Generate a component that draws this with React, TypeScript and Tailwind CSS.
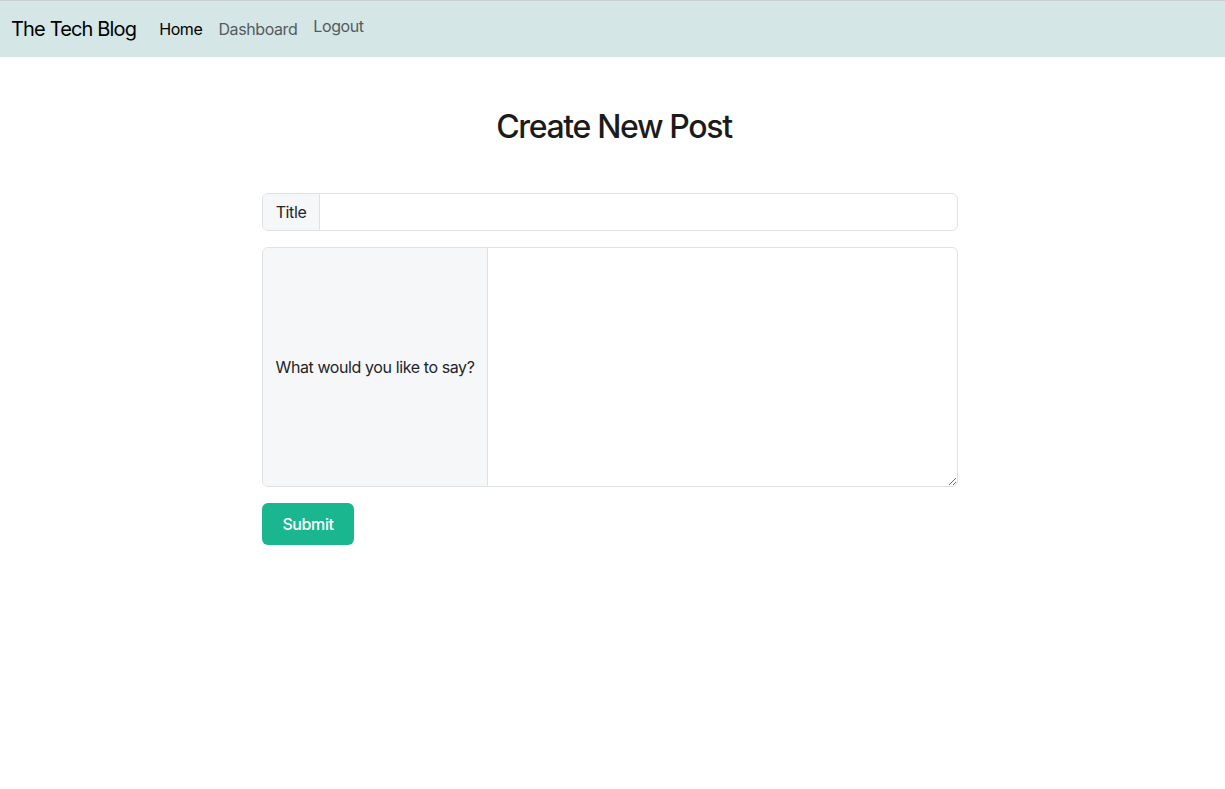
import React from "react";

export default function App() {
  const font = { fontFamily: "Inter, 'Noto Sans', 'Liberation Sans', sans-serif" };
  return (
    <div className="min-h-screen bg-white text-[#212529] tracking-[-0.025em]" style={font}>
      <nav className="h-[57px] bg-[#d4e6e5] border-t border-[#c9cfcf] flex items-center px-[11px]">
        <span className="text-[20px] text-black mr-[23px] tracking-[-0.042em]">The Tech Blog</span>
        <div className="flex items-center gap-[16px] text-[16px]">
          <a className="text-black">Home</a>
          <a className="text-[#555b5e]">Dashboard</a>
          <a className="text-[#555b5e] -mt-[6px]">Logout</a>
        </div>
      </nav>
      <h2 className="text-[32px] font-medium text-center text-[#1b1b1b] mt-[51px] mb-[47px] leading-[38px] tracking-[-0.042em] pl-[3px]">
        Create New Post
      </h2>
      <main className="w-[696px] ml-[262px]">
        <div className="flex h-[38px] border border-[#dee2e6] rounded-[6px] overflow-hidden">
          <span className="bg-[#f6f7f9] border-r border-[#dee2e6] w-[57px] shrink-0 flex items-center justify-center text-[16px]">Title</span>
          <input className="flex-1 outline-none px-3" />
        </div>
        <div className="flex h-[240px] mt-[16px] border border-[#dee2e6] rounded-[6px] overflow-hidden">
          <span className="bg-[#f6f7f9] border-r border-[#dee2e6] w-[225px] shrink-0 flex items-center justify-center text-[16px]">
            What would you like to say?
          </span>
          <textarea className="flex-1 outline-none px-3 py-2 resize" />
        </div>
        <button className="mt-[16px] h-[42px] w-[92px] bg-[#1ab690] text-white text-[16px] font-medium rounded-[6px]">
          Submit
        </button>
      </main>
    </div>
  );
}
